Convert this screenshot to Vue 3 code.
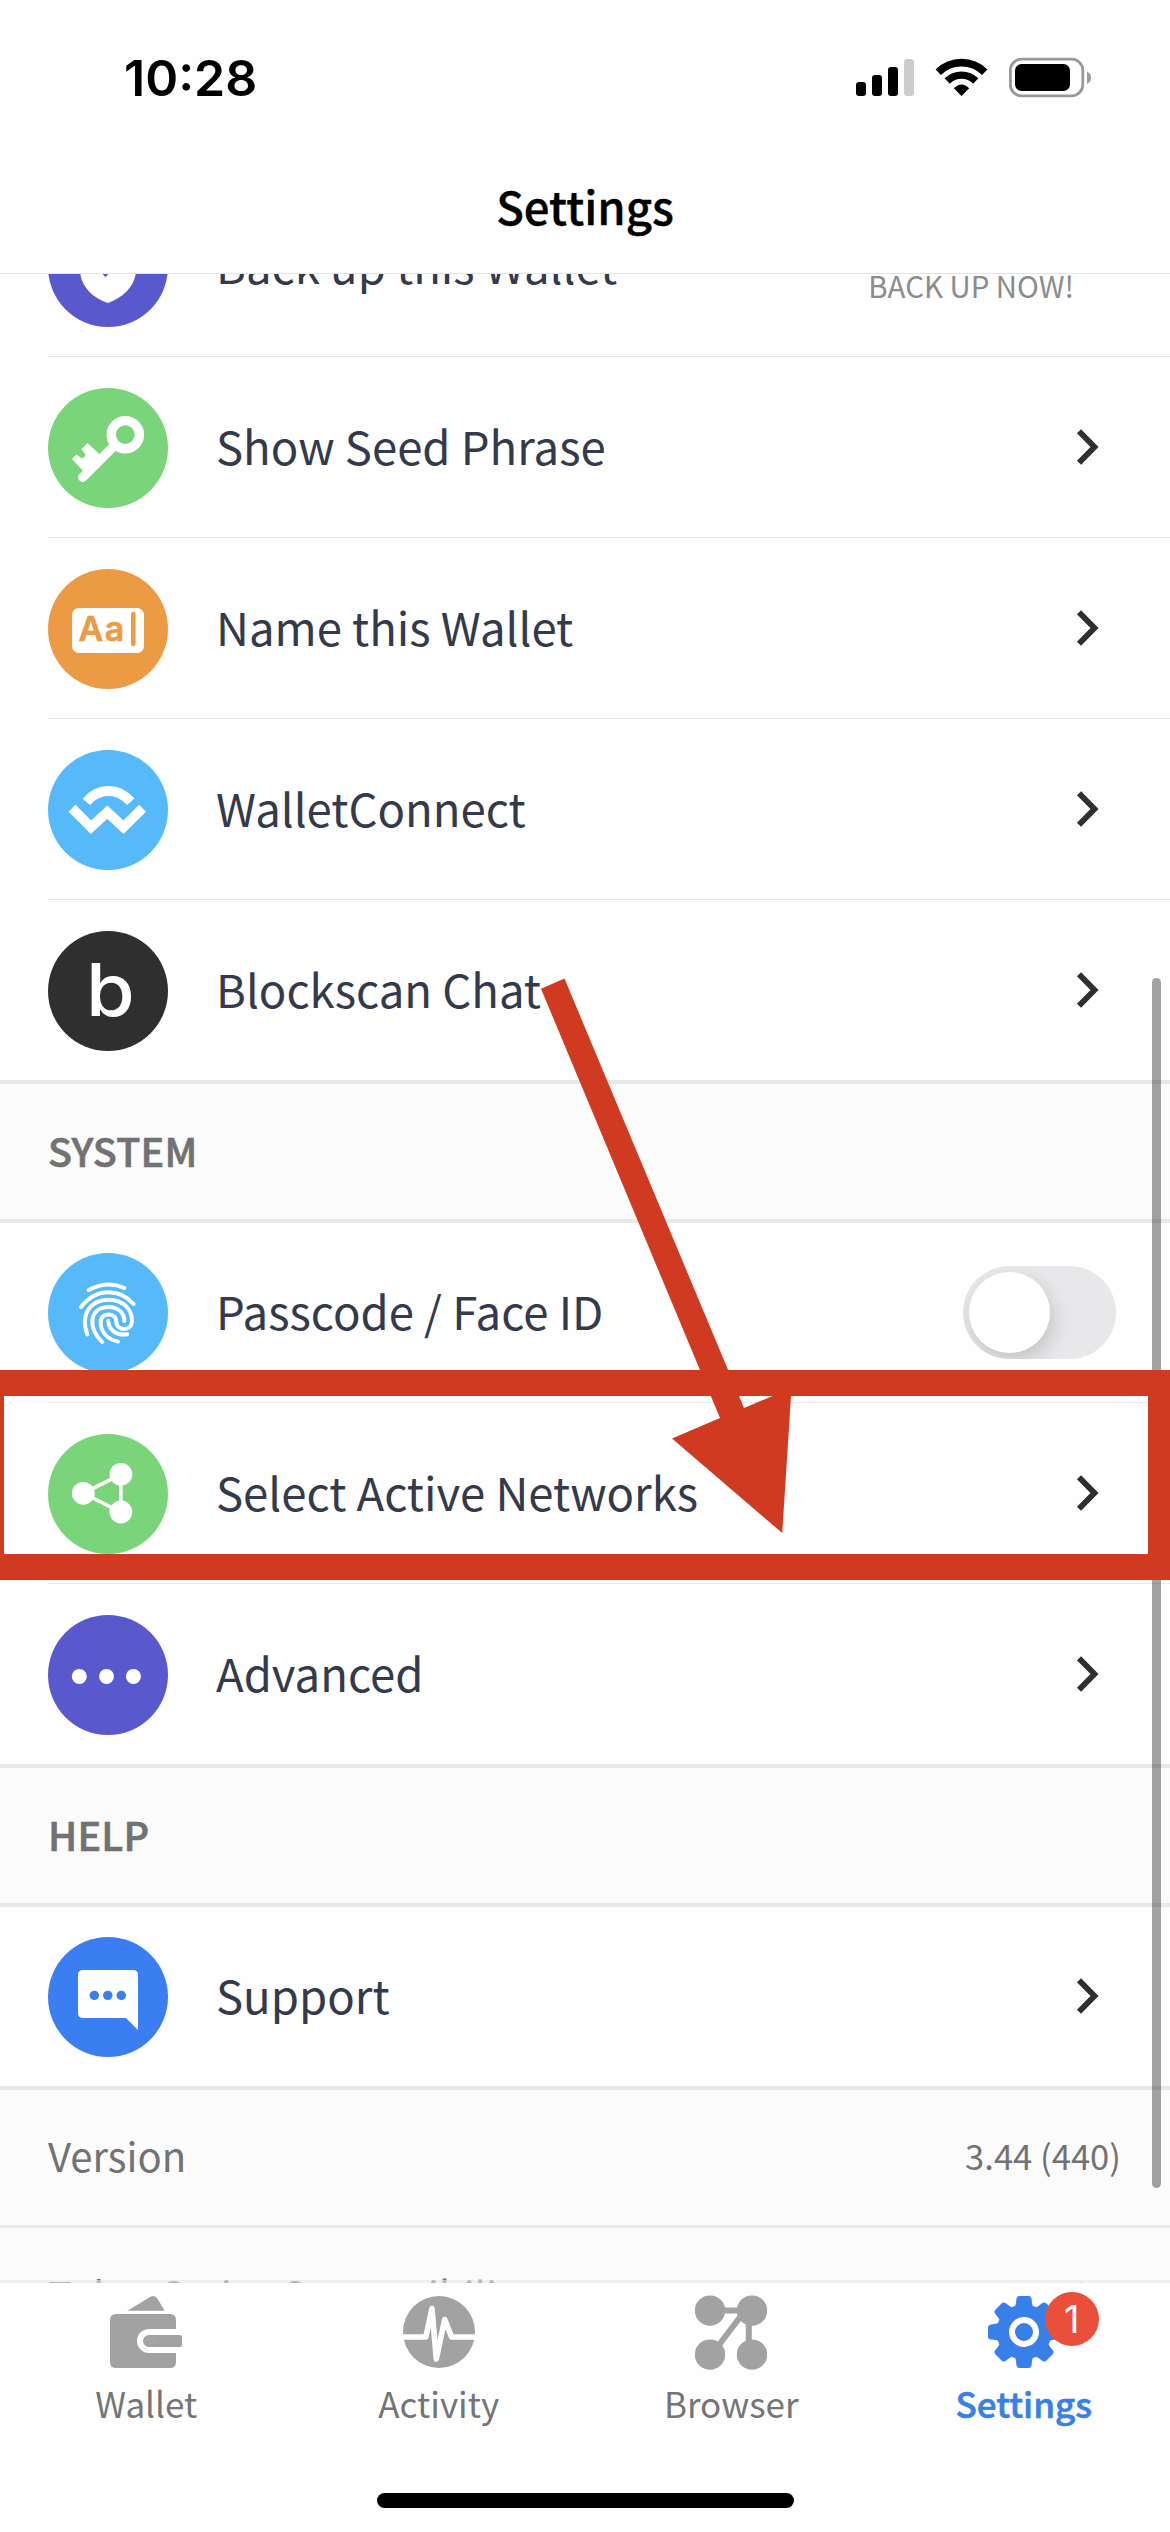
<script setup>
const walletRows = [
  { icon: 'backup', color: '#5959cd', label: 'Back up this Wallet', note: 'BACK UP NOW!' },
  { icon: 'key', color: '#7ad47a', label: 'Show Seed Phrase' },
  { icon: 'name', color: '#ed9a45', label: 'Name this Wallet' },
  { icon: 'connect', color: '#56b9f9', label: 'WalletConnect' },
  { icon: 'chat', color: '#2f2f2f', label: 'Blockscan Chat' },
]
const systemRows = [
  { icon: 'finger', color: '#56b9f9', label: 'Passcode / Face ID', toggle: true },
  { icon: 'network', color: '#7ad47a', label: 'Select Active Networks' },
  { icon: 'more', color: '#5959cd', label: 'Advanced' },
]
const helpRows = [{ icon: 'support', color: '#3b7ef1', label: 'Support' }]
const groups = [
  { rows: walletRows },
  { title: 'SYSTEM', rows: systemRows },
  { title: 'HELP', rows: helpRows },
]
const tabs = ['Wallet', 'Activity', 'Browser', 'Settings']
</script>

<template>
  <div class="screen">
    <header class="top">
      <div class="status">
        <span class="time">10:28</span>
        <svg class="indicators" width="240" height="44" viewBox="856 56 240 44">
          <rect x="856" y="82" width="10" height="14" rx="3" />
          <rect x="872" y="75" width="10" height="21" rx="3" />
          <rect x="888" y="67" width="10" height="29" rx="3" />
          <rect x="904" y="59" width="10" height="37" rx="3" fill="#ccc" />
          <g fill="none" stroke="#000">
            <path d="M938.3 72.2A33 33 0 0 1 984.7 72.2" stroke-width="7.6" />
            <path d="M947.2 81A20.3 20.3 0 0 1 975.8 81" stroke-width="7.4" />
          </g>
          <path d="M961.5 96L953.8 88.3Q961.5 80.6 969.2 88.3Z" />
          <rect x="1010.4" y="59.2" width="72.4" height="36.6" rx="11" fill="none" stroke="#999" stroke-width="2.8" />
          <rect x="1015" y="64" width="55" height="27" rx="6.5" />
          <path d="M1087 71.5Q1091 73.5 1091 77.8Q1091 82 1087 84Z" fill="#999" />
        </svg>
      </div>
      <h1 class="title">Settings</h1>
    </header>

    <main class="list">
      <section v-for="(g, gi) in groups" :key="gi" class="group">
        <h2 v-if="g.title" class="heading">{{ g.title }}</h2>
        <div class="rows">
          <div v-for="r in g.rows" :key="r.label" class="row">
            <svg class="icon" width="120" height="120" viewBox="0 0 120 120">
              <circle cx="60" cy="60" r="60" :fill="r.color" />
              <g v-if="r.icon === 'backup'">
                <path d="M60 24L88 34V64C87 79 76 90 59.8 96C43 90 33 79 32 64V34Z" fill="#fff" />
                <path d="M46 56L57.4 70.3L72 54L68 48L57.5 58L51 51Z" :fill="r.color" />
              </g>
              <g v-else-if="r.icon === 'key'">
                <circle cx="77.3" cy="46.7" r="14.1" fill="none" stroke="#fff" stroke-width="9.4" />
                <path d="M66 58L34.8 89.2" stroke="#fff" stroke-width="9.4" stroke-linecap="round" />
                <path d="M24 71L28.6 66.2L32.6 69.8Q36.6 70.6 37.6 66.4L33.5 61.3L39.5 55L51.3 66L46 78L35 82.8Z" fill="#fff" />
              </g>
              <g v-else-if="r.icon === 'name'">
                <rect x="24" y="39" width="72" height="45" rx="7" fill="#fff" />
                <text class="aa" x="30.5" y="72">Aa</text>
                <rect x="83" y="42.8" width="4.6" height="34.4" rx="2.3" :fill="r.color" />
              </g>
              <g v-else-if="r.icon === 'connect'" fill="none" stroke="#fff" stroke-width="9.8" stroke-linejoin="miter">
                <path d="M38.4 51.8Q47.5 41 60.5 41Q73.5 41 82.7 51.8" />
                <path d="M24 58.2L43 77.2L59.3 62.2L75.4 77.2L94.6 58.2" />
              </g>
              <text v-else-if="r.icon === 'chat'" class="b" transform="translate(38 85) scale(1.08 1)">b</text>
              <g v-else-if="r.icon === 'finger'" fill="none" stroke="#fff" stroke-width="12" stroke-linecap="round" transform="scale(.3333) translate(0 -9)">
                <path d="M122 120Q178 91 229 114" />
                <path d="M99 171Q134 127 182 127Q225 127 257 162" />
                <path d="M118 253C95 190 130 149 182 149C225 149 252 178 252 212C252 245 206 245 205 214C203 186 158 186 158 216C158 248 180 268 210 275" />
                <path d="M163 276C118 235 123 171 182 171C212 171 229 190 229 213" />
                <path d="M181 213C182 240 205 257 238 253" />
              </g>
              <g v-else-if="r.icon === 'network'" fill="#fff">
                <path d="M72.9 40.3L35.3 59.3L72.9 78Z" fill="none" stroke="#fff" stroke-width="3.6" />
                <circle cx="35.3" cy="59.3" r="11.4" />
                <circle cx="72.9" cy="40.3" r="11.4" />
                <circle cx="72.9" cy="78" r="11.4" />
              </g>
              <g v-else-if="r.icon === 'more'" fill="#fff">
                <circle cx="31.3" cy="61.4" r="7.5" />
                <circle cx="58.5" cy="61.4" r="7.5" />
                <circle cx="85.4" cy="61.4" r="7.5" />
              </g>
              <g v-else>
                <path d="M35 33H85Q90 33 90 38V93L78 81H35Q30 81 30 76V38Q30 33 35 33Z" fill="#fff" />
                <circle v-for="x in [46.3, 59.8, 73.3]" :key="x" :cx="x" cy="58.4" r="4.7" :fill="r.color" />
              </g>
            </svg>
            <span class="label">{{ r.label }}</span>
            <span v-if="r.note" class="note">{{ r.note }}</span>
            <span v-else-if="r.toggle" class="switch"><i class="knob"></i></span>
            <svg v-else class="chevron" width="24" height="38" viewBox="0 0 24 38"><path d="M3 3.2L18.5 19L3 34.8" /></svg>
          </div>
        </div>
      </section>
      <div class="info">
        <span class="info-label">Version</span>
        <span class="info-value">3.44 (440)</span>
      </div>
      <div class="info next">
        <span class="info-label">TokenScript Compatibility</span>
        <svg class="chevron" width="24" height="38" viewBox="0 0 24 38"><path d="M3 3.2L18.5 19L3 34.8" /></svg>
      </div>
    </main>

    <footer class="tabbar">
      <nav class="tabs">
        <div v-for="t in tabs" :key="t" class="tab" :class="{ active: t === 'Settings' }">
          <svg v-if="t === 'Wallet'" width="72" height="76" viewBox="0 -1 72 76" fill="#a2a2a2">
            <path d="M17.6 14.7L40 1Q45-2 47.6 3L54.7 14.7Z" />
            <path d="M6 18H60Q66 18 66 24V33H39A12 12 0 0 0 39 57H66V66Q66 72 60 72H6Q0 72 0 66V24Q0 18 6 18Z" />
            <path d="M39 39H69.5Q72 39 72 41.5V48.5Q72 51 69.5 51H39A6 6 0 0 1 39 39Z" />
            <circle cx="42" cy="45" r="2.7" fill="none" stroke="#b5b5b5" stroke-width=".7" stroke-dasharray="1.5 1" />
          </svg>
          <svg v-else-if="t === 'Activity'" width="72" height="76" viewBox="0 -1 72 76">
            <circle cx="36" cy="36" r="36" fill="#a2a2a2" />
            <path d="M-2 41H22.8L29 12.6L33.3 63L41.7 23.5L48.6 41H74" fill="none" stroke="#fff" stroke-width="5.6" stroke-linejoin="round" />
          </svg>
          <svg v-else-if="t === 'Browser'" width="72" height="76" viewBox="0 0 72 76" fill="#a2a2a2">
            <path d="M15 15.6H57M53.8 16V60M14 63L52 13" stroke="#a2a2a2" stroke-width="6" />
            <circle cx="15" cy="15.6" r="15.2" />
            <circle cx="57" cy="15.6" r="15.2" />
            <circle cx="15" cy="59.6" r="15.2" />
            <circle cx="57" cy="59.6" r="15.2" />
          </svg>
          <div v-else class="gear">
            <svg width="72" height="76" viewBox="-36 -37 72 76" fill="#3880e8">
              <circle r="27.5" />
              <path v-for="a in 8" :key="a" :transform="`rotate(${a * 45})`" d="M-10-24Q-8-26-7.6-33Q-7-36-4.5-36H4.5Q7-36 7.6-33Q8-26 10-24Z" />
              <circle r="12" fill="none" stroke="#fff" stroke-width="6" />
            </svg>
            <span class="badge">1</span>
          </div>
          <span class="tab-label">{{ t }}</span>
        </div>
      </nav>
      <div class="home"></div>
    </footer>

    <div class="scrollbar"></div>
    <div class="highlight"></div>
    <svg class="arrow" width="270" height="570" viewBox="530 970 270 570">
      <path d="M541 988.7L564.5 978.6L744 1408L791.5 1388L782.2 1533L672 1438.4L720 1418Z" fill="#d03a20" />
    </svg>
  </div>
</template>

<style>
body { background: #fefefe; }
</style>

<style scoped>
.screen {
  position: relative;
  display: flex;
  flex-direction: column;
  width: 1170px;
  height: 2532px;
  overflow: hidden;
  background: #fefefe;
  color: #343a4c;
  font-family: "Noto Sans CJK SC", sans-serif;
}
.top {
  box-sizing: border-box;
  flex: none;
  height: 274px;
  border-bottom: 1px solid #e4e4e4;
  color: #000;
}
.status {
  display: flex;
  justify-content: space-between;
  padding: 56px 74px 0 124px;
  height: 44px;
}
.time {
  font: 600 50px/44px Inter, sans-serif;
}
.title {
  margin: 75px 0 0;
  text-align: center;
  font-size: 45.5px;
  line-height: 60px;
  font-weight: 500;
  -webkit-text-stroke: 0.4px currentColor;
}
.list {
  display: flex;
  flex-direction: column;
  justify-content: flex-start;
  flex: none;
  height: 2009px;
  overflow: hidden;
}
.group:first-child { margin-top: -98px; }
.heading {
  box-sizing: border-box;
  height: 143px;
  margin: 0;
  padding: 36px 48px 0;
  border: solid #e8e8e8;
  border-width: 4px 0;
  background: #fbfbfb;
  color: #727272;
  font-size: 39.5px;
  line-height: 60px;
  font-weight: 500;
  letter-spacing: 0.2px;
  -webkit-text-stroke: 0.7px currentColor;
}
.heading + .rows { margin-top: -1px; }
.rows {
  padding-left: 48px;
}
.row {
  display: flex;
  align-items: flex-start;
  height: 180px;
  border-bottom: 1px solid #e8e8e8;
}
.row:last-child { border-bottom: 0; }
.icon { margin-top: 31px; flex: none; }
.label {
  flex: 1;
  margin: 58px 0 0 48px;
  font-size: 45.5px;
  line-height: 60px;
}
.note {
  margin: 89px 96px 0 0;
  color: #8c8c8c;
  font-size: 29.4px;
  line-height: 40px;
}
.chevron {
  flex: none;
  margin: 71px 70px 0 0;
  fill: none;
  stroke: #2f2f2f;
  stroke-width: 5.8;
}
.switch {
  width: 153px;
  height: 93px;
  margin: 44px 54px 0 0;
  border-radius: 47px;
  background: #e8e8ea;
  overflow: hidden;
}
.knob {
  display: block;
  width: 81px;
  height: 81px;
  margin: 6px;
  border-radius: 50%;
  background: #fff;
  box-shadow: 3px 8px 20px rgba(0, 0, 0, 0.16);
}
.aa { font: 600 34px Inter, sans-serif; fill: #ed9a45; stroke: #ed9a45; stroke-width: .6; stroke-linejoin: round; letter-spacing: 1.5px; }
.b { font: 500 73px Inter, sans-serif; fill: #fff; }
.info {
  box-sizing: border-box;
  display: flex;
  justify-content: space-between;
  flex: none;
  height: 139px;
  padding: 35px 49px 0 48px;
  border-top: 4px solid #e8e8e8;
  background: #fbfbfb;
  color: #727272;
}
.info-label { font-size: 40px; line-height: 60px; }
.info-value { font-size: 34.6px; line-height: 60px; }
.info.next { padding-top: 36px; border-top-width: 3px; }
.info.next .chevron { margin: 17px 21px 0 0; }
.tabbar {
  box-sizing: border-box;
  position: relative;
  flex: none;
  height: 252px;
  margin-top: -3px;
  border-top: 3px solid rgba(232, 232, 232, 0.6);
  background: #fefefe;
  background-clip: padding-box;
}
.tabs { display: flex; padding-top: 12px; }
.tab {
  flex: 1;
  display: flex;
  flex-direction: column;
  align-items: center;
  color: #757575;
}
.tab svg { display: block; }
.tab-label {
  margin-top: 8px;
  font-size: 35px;
  line-height: 48px;
}
.active .tab-label { color: #3880e8; font-weight: 500; -webkit-text-stroke: 0.6px currentColor; }
.gear { position: relative; }
.badge {
  position: absolute;
  left: 57px;
  top: -3px;
  width: 54px;
  height: 54px;
  border-radius: 50%;
  background: #ea4f3c;
  color: #fff;
  text-align: center;
  font: 400 38px/54px Inter, sans-serif;
}
.home {
  width: 417px;
  height: 15px;
  margin: 66px auto 0;
  border-radius: 8px;
  background: #000;
}
.scrollbar {
  position: absolute;
  left: 1152px;
  top: 978px;
  width: 9px;
  height: 1210px;
  border-radius: 5px;
  background: rgba(0, 0, 0, 0.36);
}
.highlight {
  position: absolute;
  box-sizing: border-box;
  left: -22px;
  top: 1370px;
  width: 1196px;
  height: 210px;
  border: 26px solid #d03a20;
}
.arrow { position: absolute; left: 530px; top: 970px; }
</style>
